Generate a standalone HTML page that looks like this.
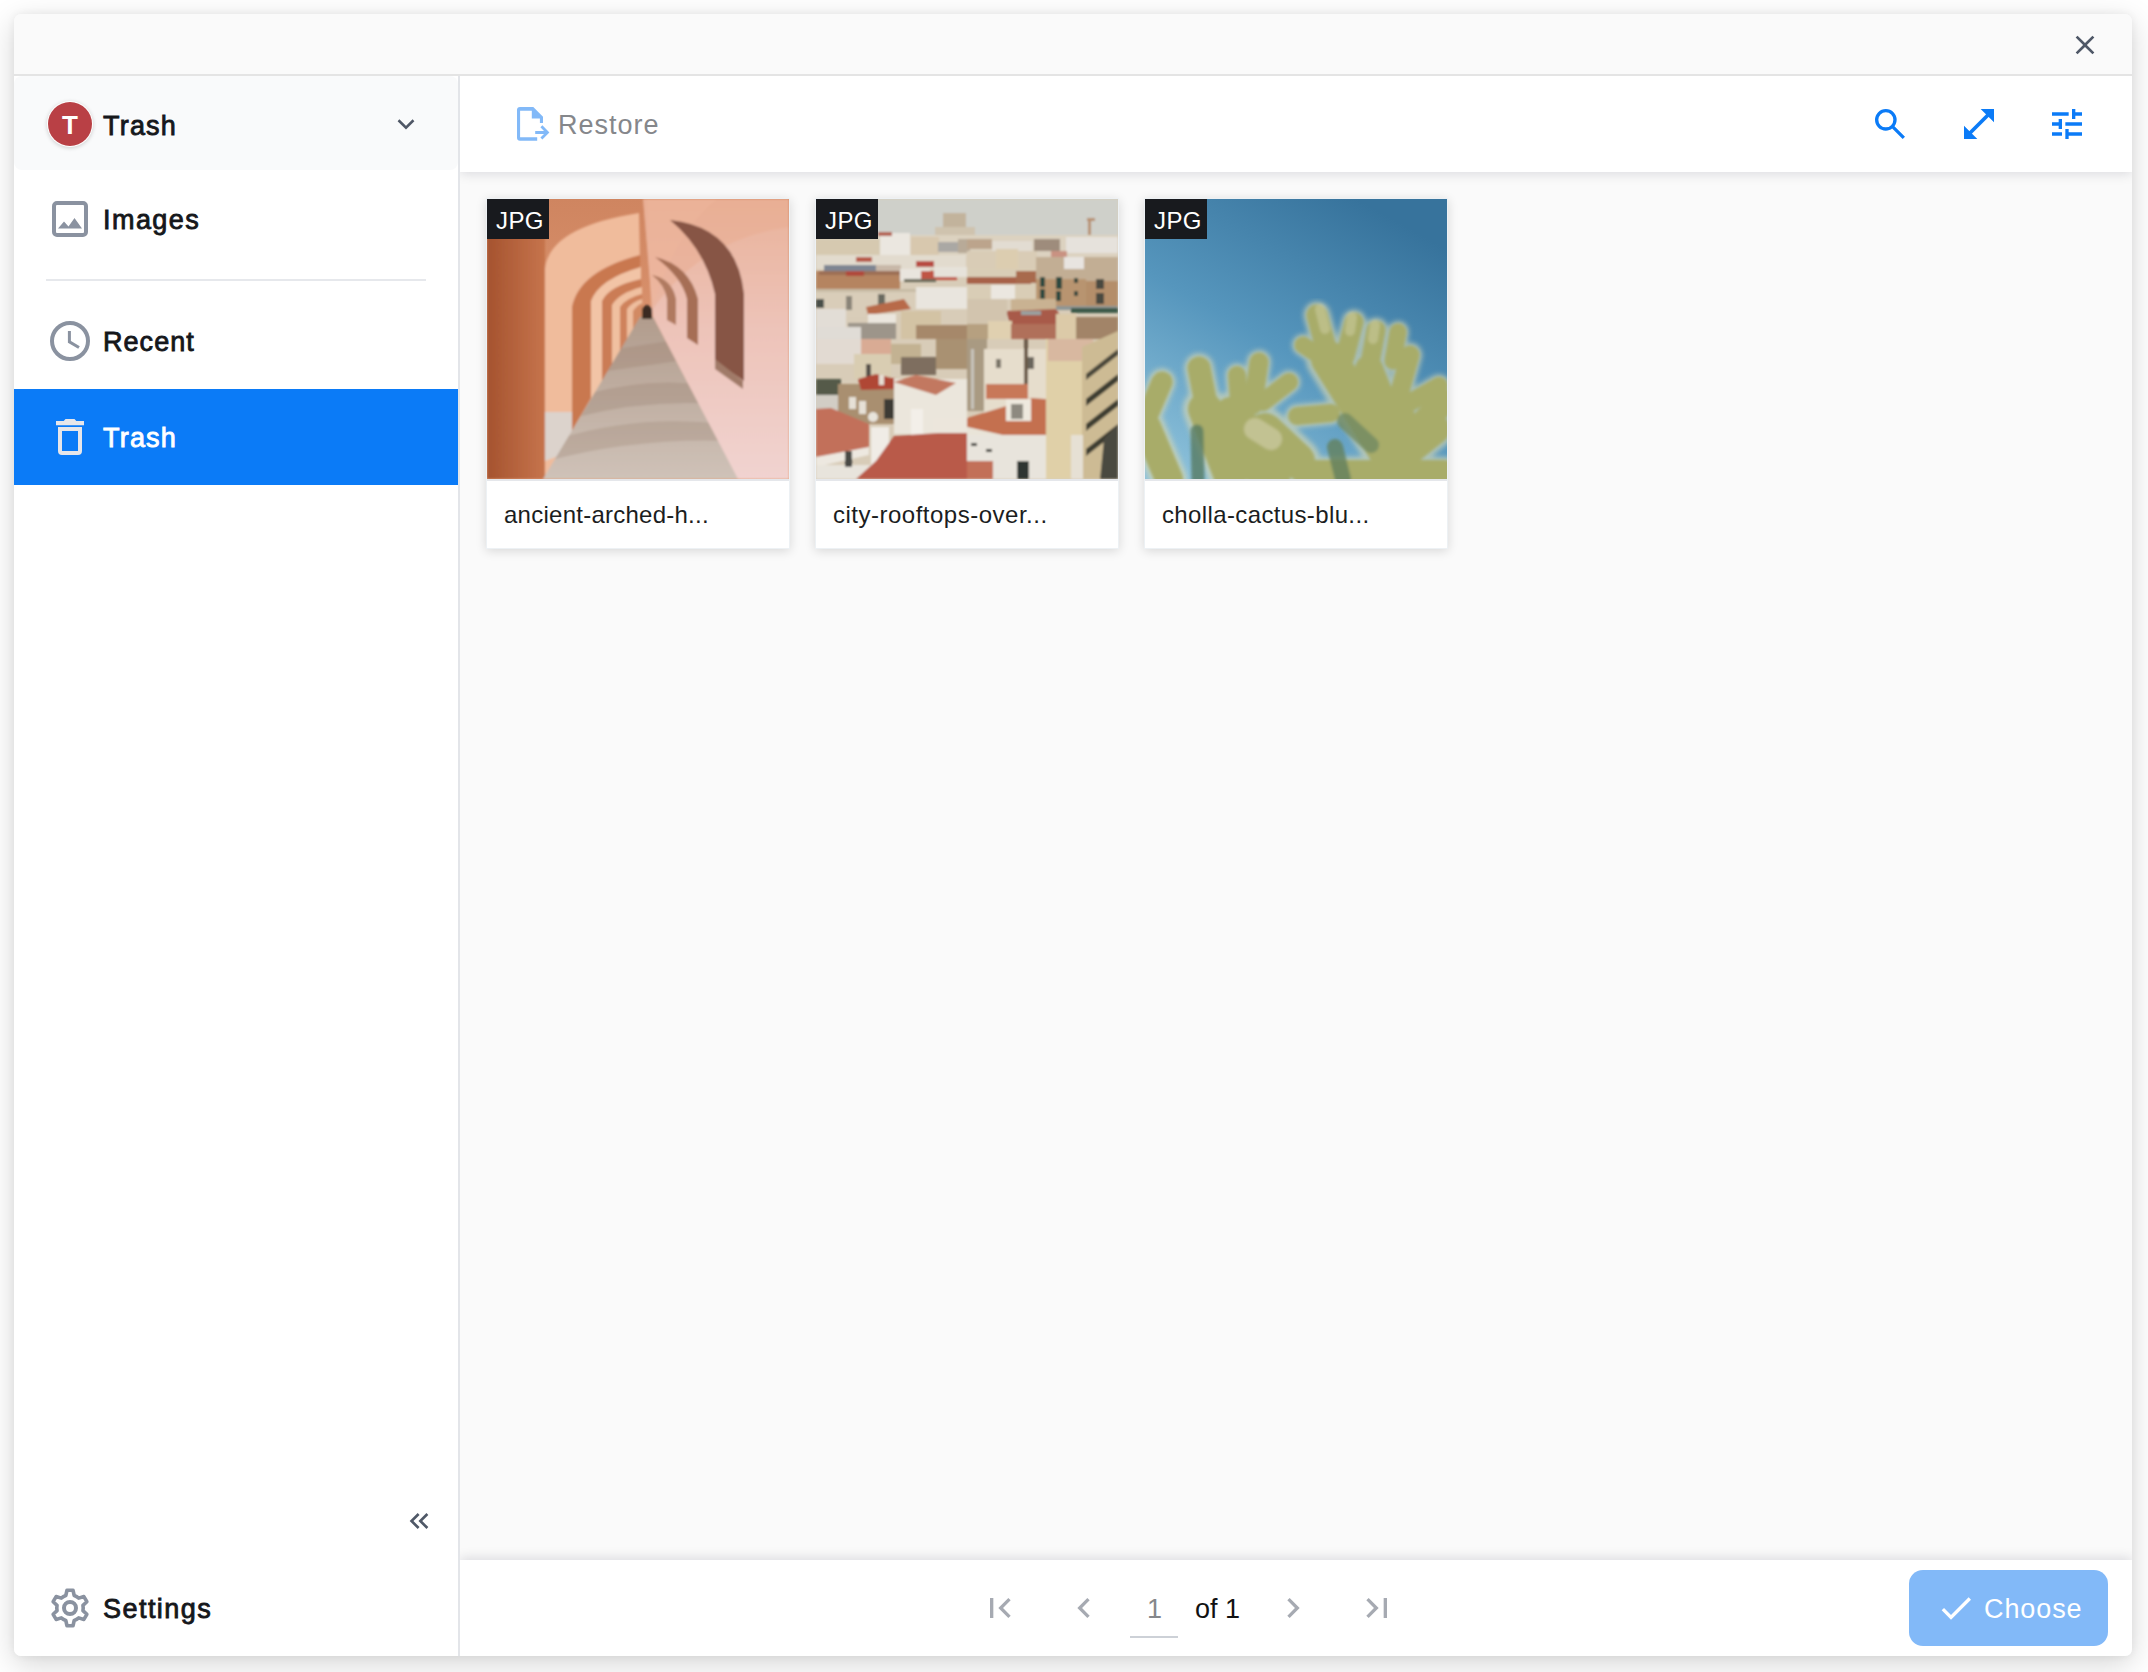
<!DOCTYPE html>
<html><head><meta charset="utf-8">
<style>
*{box-sizing:border-box;margin:0;padding:0}
html,body{width:2148px;height:1672px;overflow:hidden;background:#fff;font-family:"Liberation Sans",sans-serif}
.abs{position:absolute}
#dlg{position:absolute;left:14px;top:14px;width:2118px;height:1642px;border-radius:7px;background:#f9f9f9;box-shadow:0 8px 30px rgba(0,0,0,.17),0 0 8px rgba(0,0,0,.06);overflow:hidden}
#hdr{position:absolute;left:0;top:0;width:2118px;height:62px;background:#fafafa;border-bottom:2px solid #e4e4e4}
#side{position:absolute;left:0;top:62px;width:446px;height:1580px;background:#fff;border-right:2px solid #e3e5e9}
#dd{position:absolute;left:0;top:0;width:444px;height:94px;background:#f9fafb;border-radius:8px}
.txt{position:absolute;white-space:nowrap;line-height:1}
.b{font-weight:normal;color:#15171b;-webkit-text-stroke:.85px currentColor;letter-spacing:1.2px}
#main{position:absolute;left:446px;top:62px;width:1672px;height:1580px;background:#fafafa;overflow:hidden}
#tb{position:absolute;left:0;top:0;width:1672px;height:96px;background:#fff;box-shadow:0 2px 11px rgba(10,10,40,.13)}
#ft{position:absolute;left:0;top:1484px;width:1672px;height:96px;background:#fff;box-shadow:0 -2px 11px rgba(10,10,40,.13)}
.card{position:absolute;top:122px;width:304px;height:351px;background:#fff;border:1px solid #edf1f4;box-shadow:0 2px 10px rgba(0,0,0,.14)}
.card .img{position:absolute;left:0;top:0;width:302px;height:280px;overflow:hidden}
.card .sep{position:absolute;left:0;top:280px;width:302px;height:2px;background:#e5e7eb}
.card .badge{position:absolute;left:0;top:0;width:62px;height:40px;background:#181a1e}
svg{position:absolute;display:block}
</style></head>
<body>
<div id="dlg">
  <div id="hdr">
    <svg style="left:2055px;top:15px" width="32" height="32" viewBox="0 0 24 24"><path fill="#4f5867" d="M19 6.41L17.59 5 12 10.59 6.41 5 5 6.41 10.59 12 5 17.59 6.41 19 12 13.41 17.59 19 19 17.59 13.41 12z"/></svg>
  </div>
  <div id="side">
    <div id="dd">
      <div class="abs" style="left:33px;top:25px;width:46px;height:46px;border-radius:50%;background:#fff;box-shadow:0 1px 4px rgba(0,0,0,.18)"></div>
      <div class="abs" style="left:34px;top:26px;width:44px;height:44px;border-radius:50%;background:#b94045"></div>
      <div class="txt" style="left:47px;top:36px;font-size:26px;color:#fff;font-weight:bold;width:18px;text-align:center">T</div>
      <div class="txt b" style="left:89px;top:37px;font-size:27px">Trash</div>
      <svg style="left:377px;top:33px" width="30" height="30" viewBox="0 0 24 24"><path fill="none" stroke="#4f5766" stroke-width="2" d="M6 9l6 6 6-6"/></svg>
    </div>
    <!-- Images -->
    <svg style="left:38px;top:125px" width="36" height="36" viewBox="0 0 36 36"><rect x="2" y="2" width="32" height="32" rx="3" fill="none" stroke="#8a92a0" stroke-width="4"/><path fill="#8a92a0" d="M6 27.5L12 20.5 16.5 25.5 22.5 17 30 27.5z"/></svg>
    <div class="txt b" style="left:89px;top:131px;font-size:27px;letter-spacing:1.45px">Images</div>
    <div class="abs" style="left:32px;top:203px;width:380px;height:2px;background:#e6e8ec"></div>
    <!-- Recent -->
    <svg style="left:36px;top:245px" width="40" height="40" viewBox="0 0 40 40"><circle cx="20" cy="20" r="18" fill="none" stroke="#8a92a0" stroke-width="4"/><path fill="none" stroke="#8a92a0" stroke-width="3" d="M19.4 10V20.8L29 26.5"/></svg>
    <div class="txt b" style="left:89px;top:253px;font-size:27px;letter-spacing:1.05px">Recent</div>
    <!-- Trash selected -->
    <div class="abs" style="left:0;top:313px;width:444px;height:96px;background:#0b7bf7"></div>
    <svg style="left:40px;top:342px" width="32" height="40" viewBox="0 0 32 40"><path fill="#e6e6ea" d="M2 3H30V7.2H2z M11.5 1h9l2 2.2H9.5z"/><path fill="none" stroke="#e6e6ea" stroke-width="4" d="M6 11H26V33a2 2 0 0 1-2 2H8a2 2 0 0 1-2-2z"/></svg>
    <div class="txt b" style="left:89px;top:349px;font-size:27px;color:#fff">Trash</div>
    <!-- collapse -->
    <svg style="left:389px;top:1429px" width="32" height="32" viewBox="0 0 24 24"><path fill="#4f5867" d="M17.59 18L19 16.59 14.42 12 19 7.41 17.59 6l-6 6z M11 18l1.41-1.41L7.83 12l4.58-4.59L11 6l-6 6z"/></svg>
    <!-- settings -->
    <svg style="left:36px;top:1512px" width="40" height="40" viewBox="0 0 40 40"><path fill="none" stroke="#8a92a0" stroke-width="3.6" stroke-linejoin="round" d="M15.80 7.49L17.00 2.25L23.00 2.25L24.20 7.49A13.2 13.2 0 0 1 28.74 10.11L33.87 8.53L36.87 13.72L32.94 17.38A13.2 13.2 0 0 1 32.94 22.62L36.87 26.28L33.87 31.47L28.74 29.89A13.2 13.2 0 0 1 24.20 32.51L23.00 37.75L17.00 37.75L15.80 32.51A13.2 13.2 0 0 1 11.26 29.89L6.13 31.47L3.13 26.28L7.06 22.62A13.2 13.2 0 0 1 7.06 17.38L3.13 13.72L6.13 8.53L11.26 10.11A13.2 13.2 0 0 1 15.80 7.49Z"/><circle cx="20" cy="20" r="6" fill="none" stroke="#8a92a0" stroke-width="4"/></svg>
    <div class="txt b" style="left:89px;top:1520px;font-size:27px;letter-spacing:1.45px">Settings</div>
  </div>
  <div id="main">
    <!-- cards -->
    <div class="card" style="left:26px"><div class="img" id="img1"><svg width="302" height="280" viewBox="0 0 302 280" preserveAspectRatio="none" style="left:0;top:0">
<defs>
<linearGradient id="a1w" x1="0" y1="0" x2="1" y2="0"><stop offset="0" stop-color="#a5532f"/><stop offset="1" stop-color="#c6744c"/></linearGradient>
<linearGradient id="a1r" x1="0" y1="0" x2="0" y2="1"><stop offset="0" stop-color="#e9b29a"/><stop offset=".45" stop-color="#edc3b8"/><stop offset="1" stop-color="#f1d3d0"/></linearGradient>
<linearGradient id="a1f" x1="0" y1="0" x2="0" y2="1"><stop offset="0" stop-color="#ae9888"/><stop offset="1" stop-color="#cfc2b8"/></linearGradient>
<linearGradient id="a1c" x1="0" y1="0" x2="0" y2="1"><stop offset="0" stop-color="#cf8560"/><stop offset="1" stop-color="#e5a07c"/></linearGradient>
<filter id="a1b"><feGaussianBlur stdDeviation="1.1"/></filter>
</defs>
<rect width="302" height="280" fill="url(#a1c)"/>
<g filter="url(#a1b)">
<path d="M154 0H302V280H250L166 118L156 0Z" fill="url(#a1r)"/>
<path d="M156 0H302V28Q215 40 166 110Z" fill="#e8ab8e" opacity=".45"/>
<path d="M160 0H230Q190 30 164 112Z" fill="#eeb69c" opacity=".5"/>
<rect x="0" y="0" width="58" height="280" fill="url(#a1w)"/>
<path d="M58 280V70Q62 28 152 14L154 110L110 190L58 280Z" fill="#f0bc9c"/>
<path d="M85 280V108Q92 72 153 56L154 112L85 232Z" fill="#c97850"/>
<path d="M58 213H85V252L58 262Z" fill="#dcd3cc"/>
<path d="M104 218V102Q112 80 154 68L154 112Z" fill="#f2c4a6"/>
<path d="M115 200V102Q122 87 154 80L155 113Z" fill="#cb7c55"/>
<path d="M125 186V106Q132 94 155 88L155 114Z" fill="#f0c0a0"/>
<path d="M133 173V108Q139 99 155 95L155 115Z" fill="#cf825b"/>
<path d="M140 160V110Q145 103 155 100L156 116Z" fill="#eebd9e"/>
<path d="M146 150V112Q150 106 156 104L156 117Z" fill="#d28a64"/>
<clipPath id="a1fc"><path d="M153 118H166L251 280H56Z"/></clipPath>
<g clip-path="url(#a1fc)">
<rect x="0" y="100" width="302" height="180" fill="url(#a1f)"/>
<path d="M130 150L195 140L205 160L120 172Z" fill="#927462" opacity=".25"/>
<path d="M100 195Q160 178 220 186L230 205Q160 200 90 218Z" fill="#8a6c5a" opacity=".22"/>
<path d="M70 240Q150 215 238 225L246 242Q150 238 60 262Z" fill="#8d7060" opacity=".22"/>
</g>
<path d="M183 21Q250 28 257 95V182L228 162V95Q218 50 183 21Z" fill="#875545"/>
<path d="M228 160L256 182V190L228 170Z" fill="#a07a68"/>
<path d="M168 58Q202 66 211 100V146L200 139V100Q195 78 168 58Z" fill="#a66e55"/>
<path d="M165 76Q185 80 189 100V126L180 121V100Q178 86 165 76Z" fill="#b07a60"/>
<path d="M155 120V110Q160 102 165 110V120Z" fill="#3a2a22"/>
</g>
</svg>
</div><div class="sep"></div><div class="badge"></div>
      <div class="txt" style="left:9px;top:10px;font-size:24px;color:#fff;letter-spacing:.4px">JPG</div>
      <div class="txt" style="left:17px;top:304px;font-size:24px;color:#1b1d21;letter-spacing:.25px">ancient-arched-h...</div></div>
    <div class="card" style="left:355px"><div class="img" id="img2"><svg width="302" height="280" viewBox="0 0 302 280" preserveAspectRatio="none" style="left:0;top:0">
<defs>
<filter id="c2b"><feGaussianBlur stdDeviation="0.8"/></filter>
</defs>
<rect width="302" height="280" fill="#d8ccb8"/>
<g filter="url(#c2b)">
<rect x="0" y="0" width="302" height="40" fill="#cfd0ca"/>
<rect x="127" y="14" width="23" height="18" fill="#c2b39c"/>
<rect x="119" y="28" width="40" height="10" fill="#cfc3ae"/>
<rect x="272" y="20" width="3" height="30" fill="#b89070"/>
<rect x="271" y="19" width="8" height="3" fill="#b89070"/>
<!-- distant band -->
<rect x="0" y="36" width="302" height="22" fill="#dcd2c0"/>
<rect x="64" y="34" width="30" height="22" fill="#ebe7e0"/>
<rect x="0" y="40" width="64" height="18" fill="#d6c9b0"/>
<rect x="95" y="38" width="28" height="18" fill="#d8c8ae"/>
<rect x="122" y="43" width="20" height="10" fill="#aaa8a4"/>
<rect x="142" y="40" width="12" height="14" fill="#b8aa98"/>
<rect x="151" y="40" width="25" height="10" fill="#bca48c"/>
<rect x="218" y="40" width="26" height="12" fill="#9e8c7c"/>
<rect x="176" y="42" width="40" height="10" fill="#e2dcd2"/>
<rect x="250" y="38" width="52" height="16" fill="#e6e2dc"/>
<rect x="62" y="33" width="14" height="4" fill="#b46050"/>
<!-- band 2 -->
<rect x="0" y="56" width="150" height="14" fill="#e2dbce"/>
<rect x="40" y="58" width="16" height="5" fill="#b85a4a"/>
<rect x="100" y="62" width="18" height="6" fill="#b84c42"/>
<rect x="8" y="66" width="52" height="7" fill="#7e8592"/>
<rect x="60" y="66" width="25" height="6" fill="#c8b8a8"/>
<rect x="151" y="52" width="70" height="18" fill="#d9ccb6"/>
<rect x="180" y="50" width="22" height="20" fill="#dccdb0"/>
<rect x="235" y="52" width="16" height="8" fill="#c99282"/>
<!-- brown orange building left -->
<rect x="0" y="72" width="84" height="18" fill="#b58460"/>
<rect x="3" y="72" width="81" height="4" fill="#9c6e54"/>
<rect x="30" y="72" width="18" height="5" fill="#b04a3a"/>
<rect x="84" y="70" width="30" height="12" fill="#e9e5de"/>
<rect x="105" y="72" width="36" height="9" fill="#c05545"/>
<rect x="88" y="80" width="32" height="3" fill="#6a6a5a"/>
<rect x="118" y="68" width="33" height="10" fill="#e6e2da"/>
<!-- top right mid -->
<rect x="151" y="70" width="70" height="30" fill="#d9cdb6"/>
<rect x="151" y="78" width="64" height="7" fill="#a8624a"/>
<rect x="175" y="86" width="24" height="14" fill="#ebe7e0"/>
<rect x="200" y="72" width="20" height="12" fill="#a86a4e"/>
<!-- brick building -->
<rect x="220" y="58" width="82" height="52" fill="#c2ae94"/>
<rect x="220" y="80" width="50" height="30" fill="#b89470"/>
<rect x="270" y="82" width="32" height="28" fill="#b48e6a"/>
<rect x="248" y="58" width="20" height="12" fill="#e8e4e0"/>
<rect x="224" y="78" width="5" height="10" fill="#2e4a40"/>
<rect x="224" y="90" width="5" height="10" fill="#2e4a40"/>
<rect x="240" y="78" width="6" height="12" fill="#2e4a40"/>
<rect x="240" y="92" width="5" height="10" fill="#2e4a40"/>
<rect x="258" y="79" width="4" height="5" fill="#3a4a40"/>
<rect x="258" y="92" width="4" height="5" fill="#3a4a40"/>
<rect x="280" y="80" width="8" height="10" fill="#4a4a40"/>
<rect x="280" y="94" width="8" height="11" fill="#4a4a40"/>
<!-- left facade band -->
<rect x="0" y="90" width="100" height="28" fill="#d9cdb9"/>
<rect x="0" y="90" width="100" height="3" fill="#c8bca6"/>
<rect x="0" y="100" width="8" height="9" fill="#4a5048"/>
<rect x="30" y="97" width="6" height="14" fill="#8a8478"/>
<rect x="62" y="95" width="7" height="12" fill="#6a6a60"/>
<rect x="100" y="88" width="51" height="22" fill="#e9e5de"/>
<path d="M50 108L88 100L95 110L52 116Z" fill="#b86a4a"/>
<rect x="52" y="115" width="28" height="12" fill="#ebe6de"/>
<rect x="85" y="112" width="40" height="28" fill="#d3c3a4"/>
<rect x="0" y="110" width="30" height="18" fill="#e2ddd6"/>
<rect x="32" y="124" width="48" height="16" fill="#9d958a"/>
<rect x="0" y="128" width="45" height="12" fill="#e0dcd6"/>
<rect x="100" y="126" width="51" height="14" fill="#a6886a"/>
<!-- top right lower -->
<rect x="195" y="100" width="45" height="12" fill="#c9b292"/>
<path d="M190 112L240 110L250 125L195 128Z" fill="#a85a48"/>
<rect x="205" y="112" width="20" height="4" fill="#9aa0a0"/>
<rect x="240" y="107" width="62" height="4" fill="#8e9694"/>
<rect x="255" y="109" width="47" height="5" fill="#3e5a48"/>
<rect x="151" y="100" width="40" height="25" fill="#d2c4ae"/>
<rect x="151" y="125" width="24" height="15" fill="#b6a080"/>
<rect x="172" y="122" width="24" height="18" fill="#e0d0b0"/>
<rect x="195" y="125" width="45" height="15" fill="#b0705a"/>
<rect x="240" y="115" width="20" height="25" fill="#dccaa8"/>
<rect x="260" y="118" width="42" height="22" fill="#a28468"/>
<!-- bottom-left -->
<rect x="0" y="140" width="45" height="25" fill="#e2dad2"/>
<rect x="45" y="140" width="30" height="15" fill="#d9ab94"/>
<rect x="38" y="155" width="37" height="25" fill="#d9cdb2"/>
<rect x="50" y="165" width="5" height="14" fill="#55504a"/>
<rect x="75" y="145" width="30" height="20" fill="#c3b292"/>
<rect x="85" y="158" width="35" height="18" fill="#7e6e5e"/>
<rect x="120" y="140" width="31" height="30" fill="#a99172"/>
<rect x="0" y="180" width="25" height="18" fill="#545a4a"/>
<rect x="0" y="196" width="22" height="18" fill="#d2cdc5"/>
<rect x="22" y="185" width="58" height="40" fill="#a98f70"/>
<rect x="33" y="198" width="7" height="12" fill="#e6e0d6"/>
<rect x="43" y="202" width="7" height="13" fill="#e6e0d6"/>
<rect x="68" y="200" width="10" height="20" fill="#3e3a34"/>
<path d="M42 180L60 175L80 180V190L45 191Z" fill="#b04636"/>
<rect x="63" y="176" width="5" height="10" fill="#e6ddd2"/>
<path d="M0 210L15 209L53 225V250L0 262Z" fill="#c2705a"/>
<path d="M0 258L53 248V256L0 268Z" fill="#ede8e0"/>
<rect x="0" y="266" width="55" height="14" fill="#e8e4dc"/>
<rect x="29" y="252" width="7" height="16" fill="#4a4a44"/>
<!-- center white + roofs -->
<rect x="78" y="180" width="73" height="55" fill="#ebe6dc"/>
<path d="M78 183L100 176L140 184L120 196Z" fill="#c27860"/>
<rect x="55" y="228" width="18" height="52" fill="#f0ece6"/>
<rect x="95" y="210" width="12" height="48" fill="#f3efe9"/>
<path d="M60 262L78 237L151 232V280H40Z" fill="#b95a4a"/>
<rect x="118" y="220" width="33" height="14" fill="#ece6dc"/>
<circle cx="57" cy="218" r="5" fill="#e8e4dc"/>
<!-- bottom-right -->
<rect x="151" y="140" width="20" height="72" fill="#a99a82"/>
<rect x="155" y="150" width="3" height="60" fill="#c8c4bc"/>
<rect x="168" y="150" width="62" height="75" fill="#e6ddcc"/>
<rect x="180" y="160" width="5" height="9" fill="#7a7468"/>
<rect x="210" y="158" width="8" height="12" fill="#6a665c"/>
<rect x="208" y="140" width="4" height="60" fill="#6a5a48"/>
<rect x="170" y="185" width="42" height="15" fill="#c87858"/>
<path d="M151 219L216 199L253 202L226 245L151 228Z" fill="#c47050"/>
<path d="M253 202L262 206L234 252L226 245Z" fill="#ebe6d8"/>
<path d="M151 228L226 245L234 252L151 236Z" fill="#e9e4d8"/>
<rect x="190" y="200" width="25" height="22" fill="#eee9de"/>
<rect x="195" y="205" width="12" height="15" fill="#8e8a80"/>
<rect x="151" y="236" width="110" height="44" fill="#e8e4dc"/>
<rect x="201" y="262" width="12" height="18" fill="#2e3430"/>
<rect x="155" y="244" width="6" height="3" fill="#3a3a36"/>
<rect x="170" y="250" width="6" height="3" fill="#3a3a36"/>
<rect x="151" y="262" width="26" height="18" fill="#c27058"/>
<rect x="230" y="140" width="36" height="140" fill="#e0d0a8"/>
<rect x="232" y="140" width="45" height="22" fill="#d8b8a0"/>
<path d="M266 148L302 132V280H266Z" fill="#cdbb94"/>
<path d="M270 200L302 175V182L270 207Z" fill="#3e3c32"/>
<path d="M270 225L302 200V207L270 232Z" fill="#3e3c32"/>
<path d="M270 250L302 225V232L270 257Z" fill="#3e3c32"/>
<path d="M270 175L302 150V156L270 181Z" fill="#4a463a"/>
<path d="M288 240L302 225V280H284Z" fill="#4a4840"/>
<rect x="255" y="236" width="12" height="44" fill="#e6e0d4"/>
</g>
</svg>

</div><div class="sep"></div><div class="badge"></div>
      <div class="txt" style="left:9px;top:10px;font-size:24px;color:#fff;letter-spacing:.4px">JPG</div>
      <div class="txt" style="left:17px;top:304px;font-size:24px;color:#1b1d21;letter-spacing:.5px">city-rooftops-over...</div></div>
    <div class="card" style="left:684px"><div class="img" id="img3"><svg width="302" height="280" viewBox="0 0 302 280" preserveAspectRatio="none" style="left:0;top:0">
<defs>
<linearGradient id="k3s" x1="0.7" y1="0" x2="0.1" y2="1"><stop offset="0" stop-color="#37739c"/><stop offset=".5" stop-color="#5696bd"/><stop offset="1" stop-color="#8ec2db"/></linearGradient>
<filter id="k3b"><feGaussianBlur stdDeviation="1.4"/></filter>
<filter id="k3b2"><feGaussianBlur stdDeviation="2.5"/></filter>
</defs>
<rect width="302" height="280" fill="url(#k3s)"/>
<g filter="url(#k3b2)" stroke-linecap="round" fill="none" stroke="#d8d8b4" opacity=".65"><path d="M172 116L184 160" stroke-width="27.3"/><path d="M158 146L182 162" stroke-width="22.1"/><path d="M209 123L200 158" stroke-width="24.7"/><path d="M231 131L224 170" stroke-width="24.7"/><path d="M253 133L248 162" stroke-width="22.1"/><path d="M265 156L254 196" stroke-width="24.7"/><path d="M294 187L266 203" stroke-width="23.4"/><path d="M184 160L240 250" stroke-width="46.8"/><path d="M224 170L250 236" stroke-width="36.4"/><path d="M254 196L262 232" stroke-width="28.6"/><path d="M298 203L258 246" stroke-width="33.8"/><path d="M152 217L186 214" stroke-width="23.4"/><path d="M300 272L170 272" stroke-width="28.6"/><path d="M290 230L240 270" stroke-width="39.0"/><path d="M17 183L2 218" stroke-width="27.3"/><path d="M2 228L24 280" stroke-width="36.4"/><path d="M54 169L62 210" stroke-width="29.9"/><path d="M114 163L108 206" stroke-width="24.7"/><path d="M144 183L118 203" stroke-width="23.4"/><path d="M92 176L94 203" stroke-width="23.4"/><path d="M60 210L85 275" stroke-width="44.2"/><path d="M86 215L118 250" stroke-width="44.2"/><path d="M120 232L152 262" stroke-width="46.8"/><path d="M140 250L165 280" stroke-width="33.8"/><path d="M95 260L130 280" stroke-width="39.0"/></g>
<g filter="url(#k3b)" stroke-linecap="round" fill="none" stroke="#a8ac69"><path d="M172 116L184 160" stroke-width="21.0"/><path d="M158 146L182 162" stroke-width="17.0"/><path d="M209 123L200 158" stroke-width="19.0"/><path d="M231 131L224 170" stroke-width="19.0"/><path d="M253 133L248 162" stroke-width="17.0"/><path d="M265 156L254 196" stroke-width="19.0"/><path d="M294 187L266 203" stroke-width="18.0"/><path d="M184 160L240 250" stroke-width="36.0"/><path d="M224 170L250 236" stroke-width="28.0"/><path d="M254 196L262 232" stroke-width="22.0"/><path d="M298 203L258 246" stroke-width="26.0"/><path d="M152 217L186 214" stroke-width="18.0"/><path d="M300 272L170 272" stroke-width="22.0"/><path d="M290 230L240 270" stroke-width="30.0"/><path d="M17 183L2 218" stroke-width="21.0"/><path d="M2 228L24 280" stroke-width="28.0"/><path d="M54 169L62 210" stroke-width="23.0"/><path d="M114 163L108 206" stroke-width="19.0"/><path d="M144 183L118 203" stroke-width="18.0"/><path d="M92 176L94 203" stroke-width="18.0"/><path d="M60 210L85 275" stroke-width="34.0"/><path d="M86 215L118 250" stroke-width="34.0"/><path d="M120 232L152 262" stroke-width="36.0"/><path d="M140 250L165 280" stroke-width="26.0"/><path d="M95 260L130 280" stroke-width="30.0"/>
<path d="M200 222L226 246" stroke="#6f8a62" stroke-width="16" opacity=".8"/>
<path d="M190 248L198 280" stroke="#62805c" stroke-width="16" opacity=".8"/>
<path d="M52 232L53 280" stroke="#557a62" stroke-width="13" opacity=".8"/>
<path d="M110 230L126 240" stroke="#cdcca4" stroke-width="22" opacity=".7"/>
<path d="M175 110L180 130M207 118L205 132M230 126L228 140" stroke="#cfd0a6" stroke-width="10" opacity=".5"/>
</g>
</svg>
</div><div class="sep"></div><div class="badge"></div>
      <div class="txt" style="left:9px;top:10px;font-size:24px;color:#fff;letter-spacing:.4px">JPG</div>
      <div class="txt" style="left:17px;top:304px;font-size:24px;color:#1b1d21;letter-spacing:.37px">cholla-cactus-blu...</div></div>
    <div id="tb">
      <svg style="left:56px;top:30px" width="36" height="38" viewBox="0 0 36 38"><path fill="#82b9f8" d="M4 1H17.3L27 10.7V17.1H23.9V12.6H15.8V4.7H4.1V31.2H21.2V34.8H4A3 3 0 0 1 1 31.8V4A3 3 0 0 1 4 1Z M19.2 24.9H28L24.4 21.3L26.4 19.2L33.4 26.4L26.4 33.5L24.4 31.4L28 27.9H19.2Z"/></svg>
      <div class="txt" style="left:98px;top:36px;font-size:27px;color:#85878b;letter-spacing:1px">Restore</div>
      <svg style="left:1410px;top:28px" width="40" height="40" viewBox="0 -960 960 960"><path fill="#0b7bf7" d="M784-120 532-372q-30 24-69 38t-83 14q-109 0-184.5-75.5T120-580q0-109 75.5-184.5T380-840q109 0 184.5 75.5T640-580q0 44-14 83t-38 69l252 252-56 56ZM380-400q75 0 127.5-52.5T560-580q0-75-52.5-127.5T380-760q-75 0-127.5 52.5T200-580q0 75 52.5 127.5T380-400Z"/></svg>
      <svg style="left:1499px;top:28px" width="40" height="40" viewBox="0 0 24 24"><path fill="#0b7bf7" d="M13 3h8v8z M3 13v8h8z"/><path stroke="#0b7bf7" stroke-width="2.2" d="M18 6L6 18"/></svg>
      <svg style="left:1587px;top:28px" width="40" height="40" viewBox="0 0 24 24"><path fill="#0b7bf7" d="M3 17v2h6v-2H3zM3 5v2h10V5H3zm10 16v-2h8v-2h-8v-2h-2v6h2zM7 9v2H3v2h4v2h2V9H7zm14 4v-2H11v2h10zm-6-4h2V7h4V5h-4V3h-2v6z"/></svg>
    </div>
    <div id="ft">
      <svg style="left:520px;top:28px" width="40" height="40" viewBox="0 0 24 24"><path fill="#a6aab2" d="M18.41 16.59L13.82 12l4.59-4.59L17 6l-6 6 6 6zM6 6h2v12H6z"/></svg>
      <svg style="left:604px;top:28px" width="40" height="40" viewBox="0 0 24 24"><path fill="#a6aab2" d="M15.41 7.41L14 6l-6 6 6 6 1.41-1.41L10.83 12z"/></svg>
      <div class="txt" style="left:687px;top:36px;font-size:27px;color:#85878b">1</div>
      <div class="abs" style="left:670px;top:76px;width:48px;height:2px;background:#cdd1d7"></div>
      <div class="txt" style="left:735px;top:36px;font-size:27px;color:#111">of 1</div>
      <svg style="left:813px;top:28px" width="40" height="40" viewBox="0 0 24 24"><path fill="#a6aab2" d="M10 6L8.59 7.41 13.17 12l-4.58 4.59L10 18l6-6z"/></svg>
      <svg style="left:897px;top:28px" width="40" height="40" viewBox="0 0 24 24"><path fill="#a6aab2" d="M5.59 7.41L10.18 12l-4.59 4.59L7 18l6-6-6-6zM16 6h2v12h-2z"/></svg>
      <div class="abs" style="left:1449px;top:10px;width:199px;height:76px;border-radius:14px;background:#82b9f8"></div>
      <svg style="left:1476px;top:28px" width="40" height="40" viewBox="0 0 24 24"><path fill="#fff" d="M9 16.17L4.83 12l-1.42 1.41L9 19 21 7l-1.41-1.41z"/></svg>
      <div class="txt" style="left:1524px;top:36px;font-size:27px;color:#fff;letter-spacing:.9px">Choose</div>
    </div>
  </div>
</div>
</body></html>
